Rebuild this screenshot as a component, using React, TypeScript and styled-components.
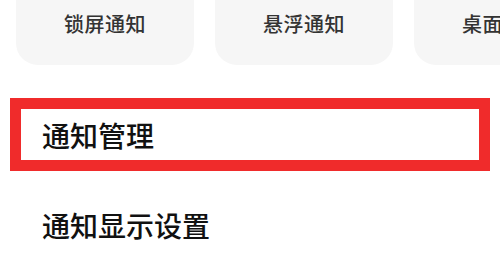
import React from 'react'
import styled, { createGlobalStyle } from 'styled-components'

const GlobalStyle = createGlobalStyle`
	html, body {
		margin: 0;
		padding: 0;
		background: #ffffff;
	}
	body {
		font-family: "Noto Sans CJK SC", "Noto Sans", sans-serif;
		width: 500px;
		height: 261px;
		overflow: hidden;
	}
`;

const shortcuts = ['锁屏通知', '悬浮通知', '桌面图标'];

const App = () => {
	return (
		<>
			<GlobalStyle />
			<Page>
				<CardStrip>
					{shortcuts.map((label) => (
						<Card key={label}>
							<CardLabel>{label}</CardLabel>
						</Card>
					))}
				</CardStrip>
				<HighlightBox>
					<ItemTitle>通知管理</ItemTitle>
				</HighlightBox>
				<Row>
					<ItemTitle>通知显示设置</ItemTitle>
				</Row>
			</Page>
		</>
	);
}

const Page = styled.div`
	width: 500px;
	height: 261px;
	overflow: hidden;
	display: flex;
	flex-direction: column;
`;

const CardStrip = styled.div`
	display: flex;
	gap: 21px;
	padding-left: 16px;
	overflow: hidden;
	flex-shrink: 0;
`;

const Card = styled.div`
	flex: 0 0 178px;
	height: 65px;
	background: #f6f6f6;
	border-radius: 0 0 22px 22px;
	display: flex;
	justify-content: center;
	padding-top: 10px;
	box-sizing: border-box;
`;

const CardLabel = styled.div`
	font-size: 20px;
	line-height: 28px;
	font-weight: 500;
	color: #333333;
	white-space: nowrap;
	letter-spacing: 0.5px;
`;

const HighlightBox = styled.div`
	margin: 33px 10px 0;
	height: 73px;
	box-sizing: border-box;
	border: 11px solid #f02b2b;
	display: flex;
	align-items: center;
	padding-left: 21px;
`;

const Row = styled.div`
	margin-top: 34px;
	height: 40px;
	display: flex;
	align-items: center;
	padding-left: 42px;
`;

const ItemTitle = styled.div`
	font-size: 28px;
	line-height: 40px;
	font-weight: 500;
	color: #111111;
	white-space: nowrap;
`;

export default App
